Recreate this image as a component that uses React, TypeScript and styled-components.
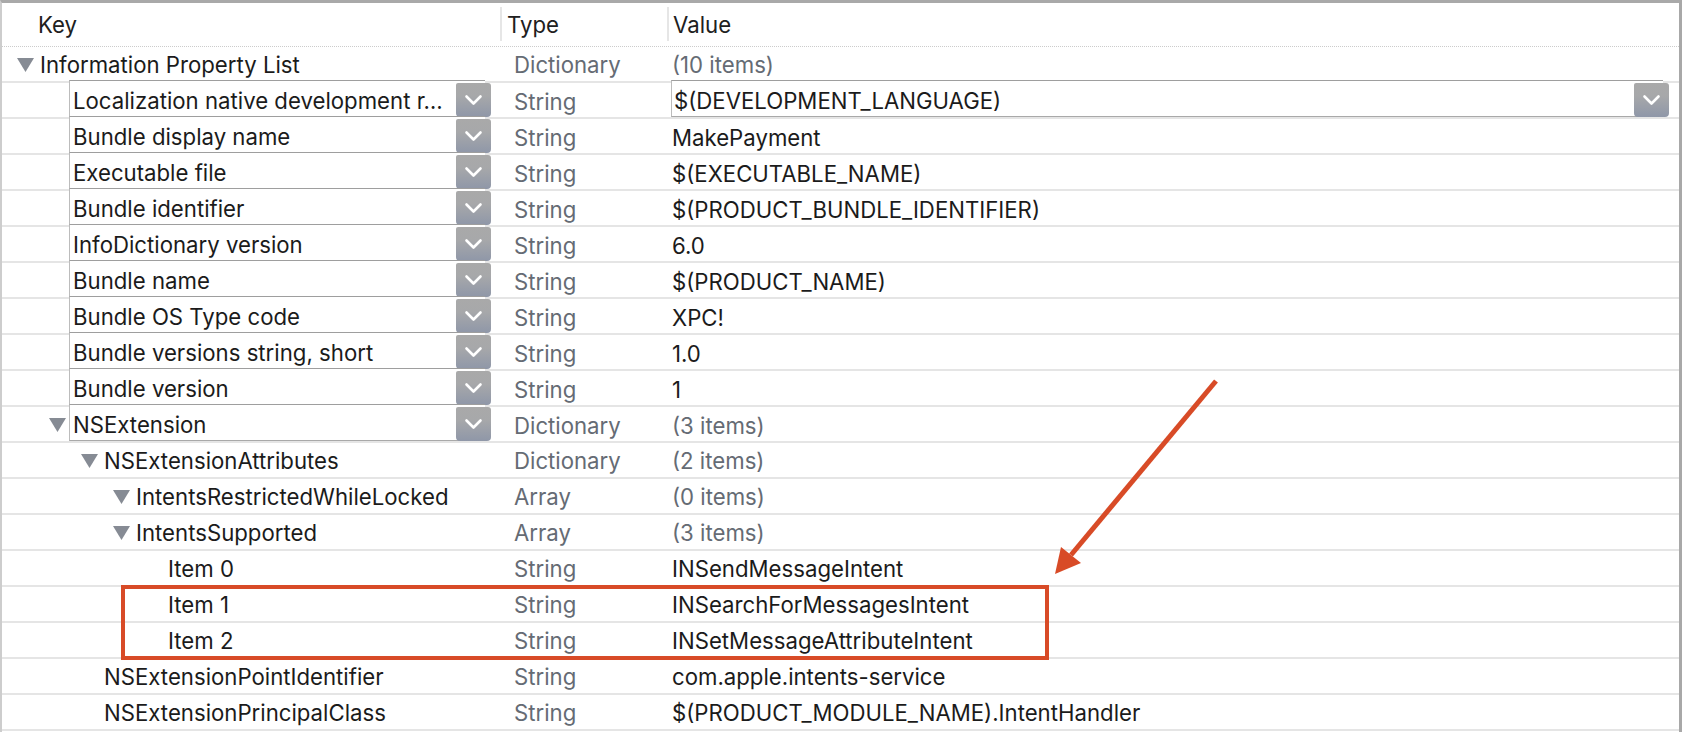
import React from "react";
import styled, { createGlobalStyle } from "styled-components";

const GlobalStyle = createGlobalStyle`
  html, body { margin: 0; padding: 0; background: #fff; overflow: hidden; }
  body { font-family: Inter, "Helvetica Neue", "Liberation Sans", Arial, sans-serif; }
`;

type Entry = {
  key: string;
  type: string;
  value: string;
  level: number;
  open?: boolean;
  keyCombo?: boolean;
  valueCombo?: boolean;
  dim?: boolean;
};

const rows: Entry[] = [
  { key: "Information Property List", type: "Dictionary", value: "(10 items)", level: 0, open: true, dim: true },
  { key: "Localization native development r\u2026", type: "String", value: "$(DEVELOPMENT_LANGUAGE)", level: 1, keyCombo: true, valueCombo: true },
  { key: "Bundle display name", type: "String", value: "MakePayment", level: 1, keyCombo: true },
  { key: "Executable file", type: "String", value: "$(EXECUTABLE_NAME)", level: 1, keyCombo: true },
  { key: "Bundle identifier", type: "String", value: "$(PRODUCT_BUNDLE_IDENTIFIER)", level: 1, keyCombo: true },
  { key: "InfoDictionary version", type: "String", value: "6.0", level: 1, keyCombo: true },
  { key: "Bundle name", type: "String", value: "$(PRODUCT_NAME)", level: 1, keyCombo: true },
  { key: "Bundle OS Type code", type: "String", value: "XPC!", level: 1, keyCombo: true },
  { key: "Bundle versions string, short", type: "String", value: "1.0", level: 1, keyCombo: true },
  { key: "Bundle version", type: "String", value: "1", level: 1, keyCombo: true },
  { key: "NSExtension", type: "Dictionary", value: "(3 items)", level: 1, open: true, keyCombo: true, dim: true },
  { key: "NSExtensionAttributes", type: "Dictionary", value: "(2 items)", level: 2, open: true, dim: true },
  { key: "IntentsRestrictedWhileLocked", type: "Array", value: "(0 items)", level: 3, open: true, dim: true },
  { key: "IntentsSupported", type: "Array", value: "(3 items)", level: 3, open: true, dim: true },
  { key: "Item 0", type: "String", value: "INSendMessageIntent", level: 4 },
  { key: "Item 1", type: "String", value: "INSearchForMessagesIntent", level: 4 },
  { key: "Item 2", type: "String", value: "INSetMessageAttributeIntent", level: 4 },
  { key: "NSExtensionPointIdentifier", type: "String", value: "com.apple.intents-service", level: 2 },
  { key: "NSExtensionPrincipalClass", type: "String", value: "$(PRODUCT_MODULE_NAME).IntentHandler", level: 2 },
];

const Window = styled.div`
  position: relative;
  width: 1682px;
  height: 732px;
  box-sizing: border-box;
  border-top: 3px solid #a9a9a9;
  border-left: 2px solid #cdcdcd;
  border-right: 3px solid #a8a8a8;
  overflow: hidden;
  font-size: 22.2px;
  color: #1b1b1b;
  background: #fff;
`;

const HeaderRow = styled.div`
  display: grid;
  grid-template-columns: 498px 167px 1fr;
  height: 44px;
  box-sizing: border-box;
  padding: 4px 0 5px;
  border-bottom: 1px dotted #cccccc;
`;

const HeaderCell = styled.div<{ $pad: number; $divider?: boolean }>`
  display: flex;
  align-items: center;
  padding-left: ${(p) => p.$pad}px;
  border-left: ${(p) => (p.$divider ? "2px solid #e6e6e6" : "none")};
  color: #202020;
`;

const Row = styled.div`
  display: grid;
  grid-template-columns: 498px 167px 1fr;
  height: 36px;
  box-sizing: border-box;
  border-bottom: 2px solid #e5e5e5;
`;

const KeyCell = styled.div<{ $indent: number }>`
  display: flex;
  align-items: center;
  min-width: 0;
  padding-left: ${(p) => p.$indent}px;
  padding-top: 1px;
  white-space: nowrap;
`;

const Disclosure = styled.svg`
  flex: none;
  width: 17px;
  height: 14px;
  margin-right: 6px;
`;

const Spacer = styled.span`
  flex: none;
  width: 23px;
`;

const TypeCell = styled.div`
  display: flex;
  align-items: center;
  padding: 1px 0 0 14px;
  color: #656b74;
  white-space: nowrap;
`;

const ValueCell = styled.div<{ $dim?: boolean }>`
  display: flex;
  align-items: center;
  min-width: 0;
  padding: 1px 0 0 5px;
  color: ${(p) => (p.$dim ? "#656b74" : "#1b1b1b")};
  white-space: nowrap;
`;

const Combo = styled.div<{ $left: number; $right: number }>`
  flex: 1;
  min-width: 0;
  align-self: stretch;
  display: flex;
  align-items: center;
  box-sizing: border-box;
  margin: -4px ${(p) => p.$right}px 1px ${(p) => p.$left}px;
  padding-left: ${(p) => (p.$left < -1 ? 3 : 2)}px;
  background: #fff;
  border-top: 1px solid #9e9e9e;
  border-left: 1px solid #bcbcbc;
  border-bottom: 1px solid #a9a9a9;
`;

const ComboText = styled.span`
  flex: 1;
  min-width: 0;
  padding-top: 3px;
  overflow: hidden;
  white-space: nowrap;
`;

const Stepper = styled.div`
  flex: none;
  align-self: stretch;
  width: 35px;
  margin: 2px -6px -1px 0;
  border-radius: 2px 3px 4px 4px;
  background: linear-gradient(to bottom, #a9a9a9 0%, #a7a8aa 38%, #8f97a8 100%);
  display: flex;
  align-items: center;
  justify-content: center;
`;

const Annotation = styled.svg`
  position: absolute;
  left: -2px;
  top: -3px;
  width: 1682px;
  height: 732px;
  pointer-events: none;
`;

const Chevron = () => (
  <svg width="35" height="34" viewBox="0 0 35 34">
    <polyline
      points="10.5,13.5 17.5,20.5 24.5,13.5"
      fill="none"
      stroke="#ffffff"
      strokeWidth="2.6"
      strokeLinecap="round"
      strokeLinejoin="round"
    />
  </svg>
);

const Triangle = () => (
  <Disclosure viewBox="0 0 17 14">
    <polygon points="0,0 17,0 8.5,14" fill="#868b94" />
  </Disclosure>
);

const KeyContent = ({ row }: { row: Entry }) => {
  if (row.keyCombo) {
    return (
      <Combo $left={-3} $right={15}>
        <ComboText>{row.key}</ComboText>
        <Stepper>
          <Chevron />
        </Stepper>
      </Combo>
    );
  }
  return <span>{row.key}</span>;
};

export default function App() {
  return (
    <>
      <GlobalStyle />
      <Window>
        <HeaderRow>
          <HeaderCell $pad={36}>Key</HeaderCell>
          <HeaderCell $pad={5} $divider>
            Type
          </HeaderCell>
          <HeaderCell $pad={4} $divider>
            Value
          </HeaderCell>
        </HeaderRow>
        {rows.map((row) => (
          <Row key={row.key}>
            <KeyCell $indent={15 + 32 * row.level}>
              {row.open ? <Triangle /> : <Spacer />}
              <KeyContent row={row} />
            </KeyCell>
            <TypeCell>{row.type}</TypeCell>
            <ValueCell $dim={row.dim}>
              {row.valueCombo ? (
                <Combo $left={-1} $right={16}>
                  <ComboText>{row.value}</ComboText>
                  <Stepper>
                    <Chevron />
                  </Stepper>
                </Combo>
              ) : (
                row.value
              )}
            </ValueCell>
          </Row>
        ))}
        <Annotation viewBox="0 0 1682 732">
          <rect x="123" y="587" width="924" height="71" fill="none" stroke="#d84b27" strokeWidth="4" />
          <line x1="1216" y1="381" x2="1071" y2="555" stroke="#d84b27" strokeWidth="5" />
          <polygon points="1055,574 1061,547 1081,563" fill="#d84b27" />
        </Annotation>
      </Window>
    </>
  );
}
